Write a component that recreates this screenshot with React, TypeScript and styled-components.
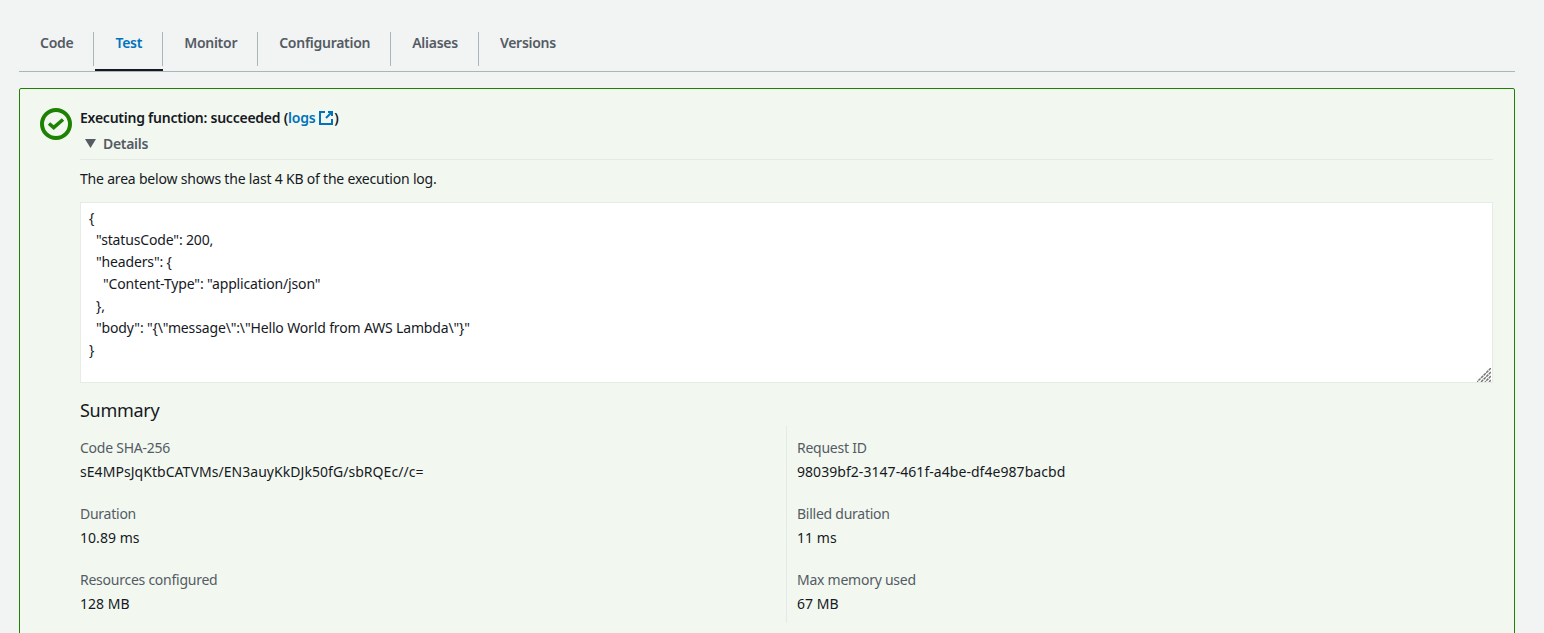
import React from "react";
import styled, { createGlobalStyle } from "styled-components";

const FONT = `"Noto Sans", "Open Sans", "Liberation Sans", sans-serif`;

const Global = createGlobalStyle`
  html, body { margin: 0; padding: 0; height: 100%; overflow: hidden; background: #f2f3f3; }
  body { font-family: ${FONT}; font-size: 14px; color: #16191f; }
  * { box-sizing: border-box; }
`;

const Page = styled.div`
  height: 633px;
  overflow: hidden;
  padding: 28px 29px 0 19px;
`;

const TabBar = styled.nav`
  display: flex;
  height: 44px;
  border-bottom: 1px solid #aab7b8;
`;

const Tab = styled.a<{ $active?: boolean; $last?: boolean }>`
  position: relative;
  display: flex;
  align-items: center;
  height: 43px;
  padding: 0 21px 14px;
  font-size: 14px;
  font-weight: 600;
  letter-spacing: -0.27px;
  color: ${(p) => (p.$active ? "#0073bb" : "#545b64")};
  cursor: pointer;

  &::after {
    content: "";
    display: ${(p) => (p.$last ? "none" : "block")};
    position: absolute;
    right: 0;
    top: 4px;
    height: 34px;
    width: 1px;
    background: #aab7b8;
  }
  &::before {
    content: "";
    display: ${(p) => (p.$active ? "block" : "none")};
    position: absolute;
    left: 1px;
    right: 0;
    bottom: 0;
    height: 2px;
    background: #16191f;
  }
`;

const Alert = styled.section`
  display: flex;
  margin-top: 16px;
  min-height: 600px;
  padding: 18px 21px 0 20px;
  border: 1px solid #1d8102;
  border-radius: 2px;
  background: #f2f8f0;
`;

const StatusIcon = styled.svg`
  flex: none;
  width: 32px;
  height: 32px;
  margin: 1px 8px 0 0;
`;

const Body = styled.div`
  flex: 1;
  min-width: 0;
`;

const Title = styled.div`
  font-size: 14px;
  line-height: 21px;
  font-weight: 600;
  letter-spacing: -0.24px;
  color: #16191f;
`;

const LogsLink = styled.a`
  color: #0073bb;
  font-weight: 600;
  cursor: pointer;
`;

const External = styled.svg`
  width: 16px;
  height: 16px;
  margin-left: 3px;
  vertical-align: -3px;
`;

const Details = styled.div`
  display: flex;
  align-items: center;
  height: 32px;
  padding-left: 5px;
  border-bottom: 1px solid #e5ebe4;
  font-weight: 600;
  letter-spacing: -0.3px;
  color: #545b64;
`;

const Caret = styled.svg`
  width: 11px;
  height: 9px;
  margin-right: 7px;
`;

const Note = styled.p`
  margin: 8px 0 12px;
  line-height: 22px;
  letter-spacing: -0.2px;
`;

const LogFrame = styled.div`
  position: relative;
  height: 181px;
`;

const LogBox = styled.textarea`
  display: block;
  width: 100%;
  height: 100%;
  padding: 4px 8px;
  border: 1px solid #e6ebe6;
  border-radius: 0;
  background: #fff;
  font-family: ${FONT};
  font-size: 14px;
  line-height: 22px;
  letter-spacing: -0.15px;
  color: #16191f;
  resize: none;
  outline: none;
  overflow: hidden;
`;

const Grip = styled.svg`
  position: absolute;
  right: 2px;
  bottom: 1px;
  width: 14px;
  height: 14px;
  pointer-events: none;
`;

const Heading = styled.h2`
  margin: 15px 0 3px;
  font-size: 18px;
  line-height: 25px;
  font-weight: 400;
  letter-spacing: -0.3px;
  color: #16191f;
`;

const Columns = styled.div`
  display: grid;
  grid-template-columns: 706px 1fr;
`;

const Column = styled.div<{ $divided?: boolean }>`
  height: 197px;
  padding: 10px 0 0 ${(p) => (p.$divided ? "10px" : "0")};
  border-left: ${(p) => (p.$divided ? "1px solid #e5ebe4" : "none")};
`;

const Field = styled.div`
  height: 66px;
`;

const Label = styled.div`
  line-height: 24px;
  letter-spacing: -0.25px;
  color: #545b64;
`;

const Value = styled.div`
  line-height: 24px;
  letter-spacing: 0.05px;
  color: #16191f;
`;

const LOG = `{
  "statusCode": 200,
  "headers": {
    "Content-Type": "application/json"
  },
  "body": "{\\"message\\":\\"Hello World from AWS Lambda\\"}"
}`;

const TABS = ["Code", "Test", "Monitor", "Configuration", "Aliases", "Versions"];

const LEFT = [
  ["Code SHA-256", "sE4MPsJqKtbCATVMs/EN3auyKkDJk50fG/sbRQEc//c="],
  ["Duration", "10.89 ms"],
  ["Resources configured", "128 MB"],
];
const RIGHT = [
  ["Request ID", "98039bf2-3147-461f-a4be-df4e987bacbd"],
  ["Billed duration", "11 ms"],
  ["Max memory used", "67 MB"],
];

export default function App() {
  return (
    <Page>
      <Global />
      <TabBar>
        {TABS.map((t, i) => (
          <Tab key={t} $active={t === "Test"} $last={i === TABS.length - 1}>
            {t}
          </Tab>
        ))}
      </TabBar>
      <Alert>
        <StatusIcon viewBox="0 0 32 32" fill="none">
          <circle cx="16" cy="16" r="14" stroke="#1d8102" strokeWidth="4" />
          <path d="M9 15.5l4.7 4.2L23 11.5" stroke="#1d8102" strokeWidth="3.6" />
        </StatusIcon>
        <Body>
          <Title>
            Executing function: succeeded (<LogsLink>logs
              <External viewBox="0 0 16 16" fill="none" stroke="#0073bb" strokeWidth="2">
                <path d="M7 2H2v12h12V9" />
                <path d="M10 2h4v4" />
                <path d="M14 2L8 8" />
              </External>
            </LogsLink>)
          </Title>
          <Details>
            <Caret viewBox="0 0 11 9">
              <path d="M0 0h11L5.5 9z" fill="#545b64" />
            </Caret>
            Details
          </Details>
          <Note>The area below shows the last 4 KB of the execution log.</Note>
          <LogFrame>
            <LogBox readOnly value={LOG} />
            <Grip viewBox="0 0 14 14" stroke="#777" strokeWidth="1.5" strokeDasharray="3 0.7">
              <path d="M14 0L0 14" />
              <path d="M14 4L4 14" />
              <path d="M14 8L8 14" />
              <path d="M14 12l-2 2" />
            </Grip>
          </LogFrame>
          <Heading>Summary</Heading>
          <Columns>
            <Column>
              {LEFT.map(([l, v]) => (
                <Field key={l}>
                  <Label>{l}</Label>
                  <Value>{v}</Value>
                </Field>
              ))}
            </Column>
            <Column $divided>
              {RIGHT.map(([l, v]) => (
                <Field key={l}>
                  <Label>{l}</Label>
                  <Value>{v}</Value>
                </Field>
              ))}
            </Column>
          </Columns>
        </Body>
      </Alert>
    </Page>
  );
}
